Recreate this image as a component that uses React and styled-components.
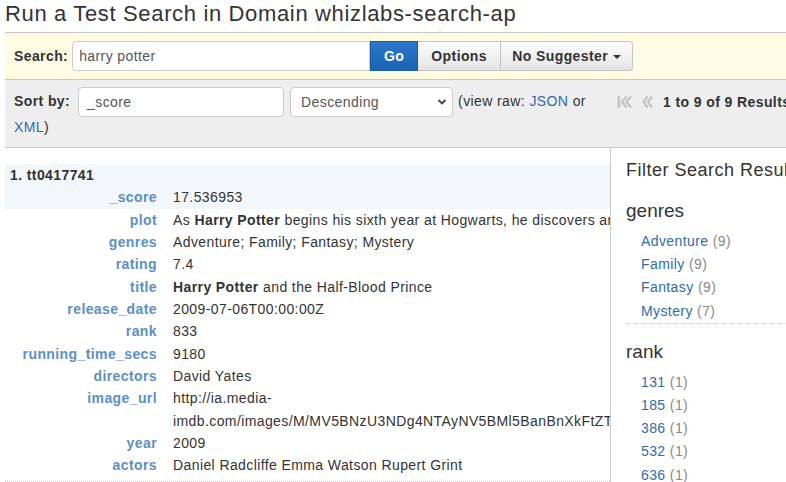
import React from "react";
import styled, { createGlobalStyle } from "styled-components";

const GlobalStyle = createGlobalStyle`
  body {
    margin: 0;
    overflow: hidden;
    font-family: "Liberation Sans", Arial, sans-serif;
    font-size: 14px;
    letter-spacing: 0.4px;
    color: #333;
    background: #fff;
  }
`;

const Page = styled.div`
  width: 900px;
  padding-left: 5px;
`;

const Title = styled.h1`
  margin: 1px 0 5px;
  font-size: 22px;
  line-height: 26px;
  letter-spacing: 0.65px;
  font-weight: normal;
  color: #333;
`;

const SearchBar = styled.div`
  display: flex;
  align-items: center;
  height: 46px;
  padding-left: 9px;
  background: #fdfbe2;
  border-top: 1px solid #c9c9c9;
  border-bottom: 1px solid #c9c9c9;
`;

const BarLabel = styled.span`
  font-weight: bold;
  color: #333;
  margin-right: ${p => p.gap || 6}px;
`;

const TextInput = styled.div`
  box-sizing: border-box;
  display: inline-block;
  vertical-align: middle;
  width: ${p => p.width}px;
  height: 30px;
  line-height: 28px;
  padding-left: ${p => p.pad || 6}px;
  background: #fff;
  border: 1px solid #ccc;
  border-radius: ${p => p.radius || "4px"};
  color: #555;
  margin-right: ${p => p.mr || 0}px;
`;

const Button = styled.div`
  box-sizing: border-box;
  display: flex;
  align-items: center;
  justify-content: center;
  height: 30px;
  width: ${p => p.width}px;
  font-weight: bold;
  color: ${p => (p.primary ? "#fff" : "#333")};
  background: ${p =>
    p.primary
      ? "linear-gradient(#2b78cc, #1a62b4)"
      : "linear-gradient(#fdfdfd, #e4e4e4)"};
  border: 1px solid ${p => (p.primary ? "#1a5aa6" : "#c4c4c4")};
  border-left-width: ${p => (p.first ? 1 : 0)}px;
  border-radius: ${p => (p.last ? "0 4px 4px 0" : "0")};
`;

const Caret = styled.span`
  display: inline-block;
  margin-left: 5px;
  margin-top: 2px;
  border-top: 4px solid #333;
  border-left: 4px solid transparent;
  border-right: 4px solid transparent;
`;

const SortBar = styled.div`
  display: flex;
  align-items: flex-start;
  padding: 7px 0 10px 9px;
  background: #eee;
  border-bottom: 1px solid #c9c9c9;
`;

const SortLeft = styled.div`
  width: 598px;
  line-height: 20px;
  color: #333;
`;

const SelectBox = styled.div`
  position: relative;
  box-sizing: border-box;
  display: inline-block;
  vertical-align: middle;
  width: 163px;
  height: 30px;
  line-height: 28px;
  padding-left: 10px;
  margin-right: 5px;
  background: #fff;
  border: 1px solid #ccc;
  border-radius: 4px;
  color: #555;
  svg {
    position: absolute;
    right: 5px;
    top: 10px;
  }
`;

const Link = styled.span`
  color: #2f6bb2;
`;

const Pager = styled.div`
  display: flex;
  align-items: center;
  height: 30px;
  margin-left: 5px;
  white-space: nowrap;
  svg {
    margin-right: 9px;
  }
`;

const PagerText = styled.span`
  font-weight: bold;
  margin-left: 1px;
  color: #333;
`;

const Content = styled.div`
  display: flex;
`;

const Results = styled.div`
  width: 605px;
  padding-top: 16px;
  overflow: hidden;
`;

const Result = styled.div`
  padding-bottom: 4px;
  border-bottom: 1px dotted #ccc;
`;

const ResultHead = styled.div`
  background: #f2f7fc;
`;

const ResultTitle = styled.div`
  padding-left: 5px;
  line-height: 22.3px;
  font-weight: bold;
  color: #333;
`;

const FieldRow = styled.div`
  display: grid;
  grid-template-columns: 152px minmax(0, 1fr);
  column-gap: 16px;
  line-height: 22.33px;
`;

const FieldName = styled.div`
  text-align: right;
  font-weight: bold;
  color: #5b8fc7;
`;

const FieldValue = styled.div`
  white-space: nowrap;
  overflow: hidden;
  color: #333;
`;

const Sidebar = styled.div`
  flex: 1;
  padding-left: 15px;
  border-left: 1px solid #ccc;
  white-space: nowrap;
`;

const FilterTitle = styled.div`
  margin-top: 10px;
  font-size: 18px;
  line-height: 24px;
  letter-spacing: 0.5px;
  color: #333;
`;

const FacetTitle = styled.div`
  margin-top: ${p => p.top}px;
  font-size: 19px;
  line-height: 26px;
  letter-spacing: 0;
  color: #333;
`;

const FacetList = styled.div`
  margin-top: 6px;
  padding-left: 15px;
  line-height: 23.2px;
  border-bottom: ${p => (p.divider ? "1px dotted #ccc" : "none")};
`;

const Count = styled.span`
  color: #888;
`;

const FirstIcon = () => (
  <svg width="16" height="16" viewBox="0 0 16 16">
    <rect x="0.5" y="2" width="2.6" height="12" fill="#c3c3c3" />
    <path
      d="M9.5 2.5 L5 8 L9.5 13.5 M14 2.5 L9.5 8 L14 13.5"
      fill="none"
      stroke="#c3c3c3"
      strokeWidth="2.4"
    />
  </svg>
);

const PrevIcon = () => (
  <svg width="11" height="16" viewBox="0 0 11 16">
    <path
      d="M5.5 2.5 L1.5 8 L5.5 13.5 M10 2.5 L6 8 L10 13.5"
      fill="none"
      stroke="#c3c3c3"
      strokeWidth="2.2"
    />
  </svg>
);

const Chevron = () => (
  <svg width="10" height="8" viewBox="0 0 10 8">
    <path d="M1.5 2 L5 5.5 L8.5 2" fill="none" stroke="#444" strokeWidth="1.8" />
  </svg>
);

const fields = [
  ["plot", <>As <b>Harry Potter</b> begins his sixth year at Hogwarts, he discovers an old book marked as "the property of the Half-Blood Prince" and begins to learn more about Lord Voldemort's dark past.</>],
  ["genres", "Adventure; Family; Fantasy; Mystery"],
  ["rating", "7.4"],
  ["title", <><b>Harry Potter</b> and the Half-Blood Prince</>],
  ["release_date", "2009-07-06T00:00:00Z"],
  ["rank", "833"],
  ["running_time_secs", "9180"],
  ["directors", "David Yates"],
  ["image_url", <>http://ia.media-<br />imdb.com/images/M/MV5BNzU3NDg4NTAyNV5BMl5BanBnXkFtZTcwMjg4MzI3Mg@@._V1_SX400_.jpg</>],
  ["year", "2009"],
  ["actors", "Daniel Radcliffe Emma Watson Rupert Grint"],
];

const genres = [
  ["Adventure", 9],
  ["Family", 9],
  ["Fantasy", 9],
  ["Mystery", 7],
];

const ranks = [
  ["131", 1],
  ["185", 1],
  ["386", 1],
  ["532", 1],
  ["636", 1],
];

const App = () => (
  <Page>
    <GlobalStyle />
    <Title>Run a Test Search in Domain whizlabs-search-ap</Title>

    <SearchBar>
      <BarLabel gap={4}>Search:</BarLabel>
      <TextInput width={298} radius="4px 0 0 4px">harry potter</TextInput>
      <Button primary first width={48}>Go</Button>
      <Button width={83}>Options</Button>
      <Button last width={132}>
        No Suggester<Caret />
      </Button>
    </SearchBar>

    <SortBar>
      <SortLeft>
        <BarLabel gap={8}>Sort by:</BarLabel>
        <TextInput width={206} pad={8} mr={6}>_score</TextInput>
        <SelectBox>
          Descending
          <Chevron />
        </SelectBox>
        (view raw: <Link>JSON</Link> or <Link>XML</Link>)
      </SortLeft>
      <Pager>
        <FirstIcon />
        <PrevIcon />
        <PagerText>1 to 9 of 9 Results</PagerText>
      </Pager>
    </SortBar>

    <Content>
      <Results>
        <Result>
          <ResultHead>
            <ResultTitle>1. tt0417741</ResultTitle>
            <FieldRow>
              <FieldName>_score</FieldName>
              <FieldValue>17.536953</FieldValue>
            </FieldRow>
          </ResultHead>
          {fields.map(([name, value]) => (
            <FieldRow key={name}>
              <FieldName>{name}</FieldName>
              <FieldValue>{value}</FieldValue>
            </FieldRow>
          ))}
        </Result>
      </Results>

      <Sidebar>
        <FilterTitle>Filter Search Results</FilterTitle>
        <FacetTitle top={16}>genres</FacetTitle>
        <FacetList divider>
          {genres.map(([g, n]) => (
            <div key={g}>
              <Link>{g}</Link> <Count>({n})</Count>
            </div>
          ))}
        </FacetList>
        <FacetTitle top={15}>rank</FacetTitle>
        <FacetList>
          {ranks.map(([r, n]) => (
            <div key={r}>
              <Link>{r}</Link> <Count>({n})</Count>
            </div>
          ))}
        </FacetList>
      </Sidebar>
    </Content>
  </Page>
);

export default App;
